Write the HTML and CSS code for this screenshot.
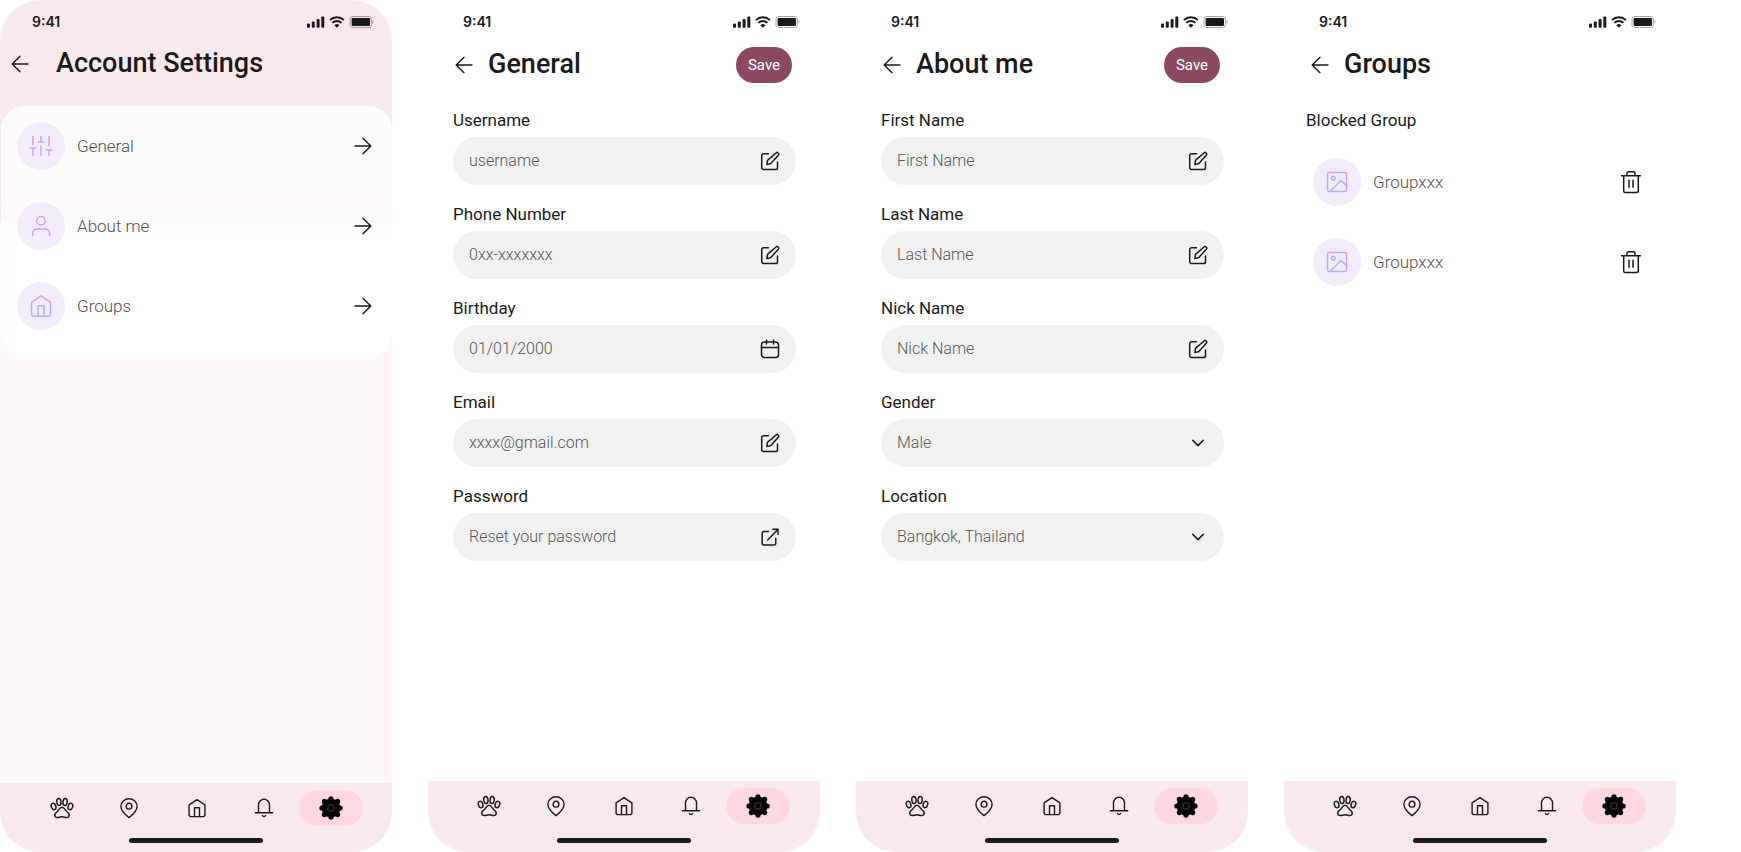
FILE: index.html
```html
<!DOCTYPE html>
<html lang="en">
<head>
<meta charset="utf-8">
<meta name="viewport" content="width=device-width, initial-scale=1">
<title>Account Settings</title>
<link rel="stylesheet" href="styles.css">
</head>
<body>
<svg class="sprite" aria-hidden="true">
  <symbol id="status" viewBox="0 0 67 12">
    <g fill="currentColor">
      <rect x="0" y="7.5" width="3" height="4.2" rx="1"/><rect x="4.8" y="5.4" width="3" height="6.3" rx="1"/><rect x="9.6" y="3" width="3" height="8.7" rx="1"/><rect x="14.3" y="0.4" width="3" height="11.3" rx="1"/>
      <rect x="44.6" y="2" width="18.4" height="8" rx="1.2"/>
      <path d="M27.3 9.3a3.7 3.7 0 0 1 5.2 0l-2.6 2.5z"/>
    </g>
    <g fill="none" stroke="currentColor" stroke-width="1.9"><path d="M22.9 4.1a10.2 10.2 0 0 1 14 0"/><path d="M25.3 6.9a6.7 6.7 0 0 1 9.2 0"/></g>
    <rect x="43" y="0.5" width="21.4" height="11" rx="2.6" fill="none" stroke="currentColor" opacity=".38"/>
    <path d="M65.5 4v4c1.5-.5 1.5-3.500 0-4z" fill="currentColor" opacity=".4"/>
  </symbol>
  <symbol id="back" viewBox="0 0 24 24"><path d="M20 12H4.500M12 4.200L4.200 12l7.800 7.800"/></symbol>
  <symbol id="next" viewBox="0 0 24 24"><path d="M4 12h15.500M12 4.200l7.800 7.800-7.800 7.800"/></symbol>
  <symbol id="edit" viewBox="0 0 24 24"><path d="M10.500 4.800H5.600a1.900 1.900 0 0 0-1.900 1.900v12a1.900 1.900 0 0 0 1.900 1.900h12a1.900 1.900 0 0 0 1.900-1.900v-5.600"/><path d="M18.300 3.700a1 1 0 0 1 1.400 0l.8.8a1 1 0 0 1 0 1.400l-7.700 8.600-3.900 1.100.6-4.200z"/></symbol>
  <symbol id="calendar" viewBox="0 0 24 24"><rect x="3.500" y="5" width="17" height="15.500" rx="3"/><path d="M3.500 10.500h17M8.500 3v4M15.500 3v4"/></symbol>
  <symbol id="external" viewBox="0 0 24 24"><path d="M10.500 6.500H5.900A1.700 1.700 0 0 0 4.200 8.200v10.200a1.700 1.700 0 0 0 1.700 1.700h10.200a1.700 1.700 0 0 0 1.700-1.700v-4.900M9.700 15L20 4.200M14.700 4.200H20v5.300"/></symbol>
  <symbol id="chevron" viewBox="0 0 24 24"><path d="M6.800 9.400l5.200 5.200 5.200-5.200"/></symbol>
  <symbol id="trash" viewBox="0 0 24 24"><path d="M2.500 5.700h19M4.700 5.700v15.200a1.600 1.600 0 0 0 1.600 1.600h11.400a1.600 1.600 0 0 0 1.600-1.600V5.700M8 5.700V3.500a1.700 1.700 0 0 1 1.700-1.700h4.600A1.700 1.700 0 0 1 16 3.500v2.200M10 10.300v7M14 10.300v7"/></symbol>
  <symbol id="sliders" viewBox="0 0 24 24"><path d="M4 2.300v8.200M1 14h6M4 14v7.700M12 2.300V8M9 8h6M12 12v9.700M20 2.300v9.400M17 16h6M20 16v5.700"/></symbol>
  <symbol id="user" viewBox="0 0 24 24"><circle cx="12" cy="6.700" r="4.300"/><path d="M3.700 21.700v-2.400a4.300 4.300 0 0 1 4.300-4.300h8.300a4.300 4.300 0 0 1 4.300 4.300v2.400"/></symbol>
  <symbol id="home" viewBox="0 0 24 24"><path d="M2.500 8.300L12 1.900l9.500 6.400v11.900a2.100 2.100 0 0 1-2.100 2.100H4.600a2.100 2.100 0 0 1-2.100-2.100zM9 22.300V11.700h6v10.600"/></symbol>
  <symbol id="image" viewBox="0 0 24 24"><rect x="2.500" y="2.500" width="19" height="19" rx="1.700"/><circle cx="8.300" cy="8.300" r="1.800"/><path d="M5 21.500l11-11 5.500 5.200"/></symbol>
  <symbol id="pin" viewBox="0 0 24 24"><path d="M20.100 10.200c0 5.200-4.400 8.500-8.100 11.400-3.700-2.900-8.100-6.200-8.100-11.400a8.100 7.500 0 0 1 16.200 0z"/><circle cx="12" cy="10.200" r="2.900"/></symbol>
  <symbol id="bell" viewBox="0 0 24 24"><path d="M3.300 16.700h17.400M6.500 16.700V9a5.500 5.700 0 0 1 11 0v7.700M10.300 19.500c.8 1.300 2.600 1.300 3.400 0"/></symbol>
  <symbol id="paw" viewBox="0 0 24 24"><ellipse cx="3.600" cy="10.500" rx="2.200" ry="3.300" transform="rotate(-18 3.600 10.500)"/><ellipse cx="8.900" cy="6" rx="2.100" ry="3.500" transform="rotate(-6 8.900 6)"/><ellipse cx="15.100" cy="6" rx="2.100" ry="3.500" transform="rotate(6 15.100 6)"/><ellipse cx="20.400" cy="10.500" rx="2.200" ry="3.300" transform="rotate(18 20.400 10.500)"/><path d="M12 11.300c-2.500 0-3.300 3.300-5.200 4.700-1.900 1.300-2.500 3.100-1.600 4.600 1.400 2.100 4.300.2 6.800.2s5.400 1.900 6.800-.2c.9-1.500.3-3.300-1.600-4.600-1.900-1.400-2.700-4.700-5.200-4.700z"/></symbol>
  <symbol id="gear" viewBox="0 0 24 24"><g fill="#050505" stroke="none"><circle cx="12" cy="12" r="9.400"/><circle cx="12" cy="2.900" r="2.600"/><circle cx="12" cy="21.100" r="2.600"/><circle cx="2.900" cy="12" r="2.600"/><circle cx="21.100" cy="12" r="2.600"/><circle cx="5.400" cy="5.400" r="2.600"/><circle cx="18.600" cy="5.400" r="2.600"/><circle cx="5.400" cy="18.600" r="2.600"/><circle cx="18.600" cy="18.600" r="2.600"/></g><circle cx="12" cy="12" r="3.200" stroke="#292929"/></symbol>
</svg>

<main class="board">
  <section class="phone phone-tinted">
    <div class="status status-wide"><span>9:41</span><svg class="status-icons" aria-hidden="true"><use href="#status"/></svg></div>
    <header class="header header-wide">
      <button class="icon-button" aria-label="Back"><svg class="icon thin"><use href="#back"/></svg></button>
      <h1 class="title">Account Settings</h1>
    </header>
    <div class="card">
      <a class="row" href="#general"><span class="avatar"><svg class="icon"><use href="#sliders"/></svg></span><span class="row-text">General</span><svg class="icon"><use href="#next"/></svg></a>
      <a class="row" href="#about"><span class="avatar"><svg class="icon"><use href="#user"/></svg></span><span class="row-text">About me</span><svg class="icon"><use href="#next"/></svg></a>
      <a class="row" href="#groups"><span class="avatar"><svg class="icon"><use href="#home"/></svg></span><span class="row-text">Groups</span><svg class="icon"><use href="#next"/></svg></a>
    </div>
    <footer class="footer footer-low">
      <nav class="nav">
        <a class="tab" href="#pets" aria-label="Pets"><svg class="icon"><use href="#paw"/></svg></a>
        <a class="tab" href="#map" aria-label="Map"><svg class="icon thin"><use href="#pin"/></svg></a>
        <a class="tab" href="#home-page" aria-label="Home"><svg class="icon small"><use href="#home"/></svg></a>
        <a class="tab" href="#alerts" aria-label="Notifications"><svg class="icon thin"><use href="#bell"/></svg></a>
        <a class="tab tab-active" href="#settings" aria-label="Settings"><svg class="icon"><use href="#gear"/></svg></a>
      </nav>
      <div class="home-bar"></div>
    </footer>
  </section>

  <section class="phone" id="general">
    <div class="status"><span>9:41</span><svg class="status-icons" aria-hidden="true"><use href="#status"/></svg></div>
    <header class="header">
      <button class="icon-button" aria-label="Back"><svg class="icon thin"><use href="#back"/></svg></button>
      <h1 class="title">General</h1>
      <button class="save">Save</button>
    </header>
    <form class="form">
      <div class="field"><label for="username">Username</label><div class="box"><input id="username" type="text" placeholder="username"><button type="button" class="icon-button" aria-label="Edit username"><svg class="icon"><use href="#edit"/></svg></button></div></div>
      <div class="field"><label for="phone">Phone Number</label><div class="box"><input id="phone" type="tel" placeholder="0xx-xxxxxxx"><button type="button" class="icon-button" aria-label="Edit phone number"><svg class="icon"><use href="#edit"/></svg></button></div></div>
      <div class="field"><label for="birthday">Birthday</label><div class="box"><input id="birthday" type="text" placeholder="01/01/2000"><button type="button" class="icon-button" aria-label="Choose birthday"><svg class="icon"><use href="#calendar"/></svg></button></div></div>
      <div class="field"><label for="email">Email</label><div class="box"><input id="email" type="email" placeholder="xxxx@gmail.com"><button type="button" class="icon-button" aria-label="Edit email"><svg class="icon"><use href="#edit"/></svg></button></div></div>
      <div class="field"><label for="password">Password</label><div class="box"><input id="password" type="password" placeholder="Reset your password"><button type="button" class="icon-button" aria-label="Reset password"><svg class="icon"><use href="#external"/></svg></button></div></div>
    </form>
    <footer class="footer">
      <nav class="nav">
        <a class="tab" href="#pets" aria-label="Pets"><svg class="icon"><use href="#paw"/></svg></a>
        <a class="tab" href="#map" aria-label="Map"><svg class="icon thin"><use href="#pin"/></svg></a>
        <a class="tab" href="#home-page" aria-label="Home"><svg class="icon small"><use href="#home"/></svg></a>
        <a class="tab" href="#alerts" aria-label="Notifications"><svg class="icon thin"><use href="#bell"/></svg></a>
        <a class="tab tab-active" href="#settings" aria-label="Settings"><svg class="icon"><use href="#gear"/></svg></a>
      </nav>
      <div class="home-bar"></div>
    </footer>
  </section>

  <section class="phone" id="about">
    <div class="status"><span>9:41</span><svg class="status-icons" aria-hidden="true"><use href="#status"/></svg></div>
    <header class="header">
      <button class="icon-button" aria-label="Back"><svg class="icon thin"><use href="#back"/></svg></button>
      <h1 class="title">About me</h1>
      <button class="save">Save</button>
    </header>
    <form class="form">
      <div class="field"><label for="first">First Name</label><div class="box"><input id="first" type="text" placeholder="First Name"><button type="button" class="icon-button" aria-label="Edit first name"><svg class="icon"><use href="#edit"/></svg></button></div></div>
      <div class="field"><label for="last">Last Name</label><div class="box"><input id="last" type="text" placeholder="Last Name"><button type="button" class="icon-button" aria-label="Edit last name"><svg class="icon"><use href="#edit"/></svg></button></div></div>
      <div class="field"><label for="nick">Nick Name</label><div class="box"><input id="nick" type="text" placeholder="Nick Name"><button type="button" class="icon-button" aria-label="Edit nick name"><svg class="icon"><use href="#edit"/></svg></button></div></div>
      <div class="field"><label for="gender">Gender</label><div class="box"><select id="gender"><option>Male</option><option>Female</option></select><svg class="icon"><use href="#chevron"/></svg></div></div>
      <div class="field"><label for="location">Location</label><div class="box"><select id="location"><option>Bangkok, Thailand</option></select><svg class="icon"><use href="#chevron"/></svg></div></div>
    </form>
    <footer class="footer">
      <nav class="nav">
        <a class="tab" href="#pets" aria-label="Pets"><svg class="icon"><use href="#paw"/></svg></a>
        <a class="tab" href="#map" aria-label="Map"><svg class="icon thin"><use href="#pin"/></svg></a>
        <a class="tab" href="#home-page" aria-label="Home"><svg class="icon small"><use href="#home"/></svg></a>
        <a class="tab" href="#alerts" aria-label="Notifications"><svg class="icon thin"><use href="#bell"/></svg></a>
        <a class="tab tab-active" href="#settings" aria-label="Settings"><svg class="icon"><use href="#gear"/></svg></a>
      </nav>
      <div class="home-bar"></div>
    </footer>
  </section>

  <section class="phone" id="groups">
    <div class="status"><span>9:41</span><svg class="status-icons" aria-hidden="true"><use href="#status"/></svg></div>
    <header class="header">
      <button class="icon-button" aria-label="Back"><svg class="icon thin"><use href="#back"/></svg></button>
      <h1 class="title">Groups</h1>
    </header>
    <div class="blocked">
      <h2 class="subtitle">Blocked Group</h2>
      <div class="row"><span class="avatar"><svg class="icon"><use href="#image"/></svg></span><span class="row-text">Groupxxx</span><button class="icon-button" aria-label="Remove group"><svg class="icon"><use href="#trash"/></svg></button></div>
      <div class="row"><span class="avatar"><svg class="icon"><use href="#image"/></svg></span><span class="row-text">Groupxxx</span><button class="icon-button" aria-label="Remove group"><svg class="icon"><use href="#trash"/></svg></button></div>
    </div>
    <footer class="footer">
      <nav class="nav">
        <a class="tab" href="#pets" aria-label="Pets"><svg class="icon"><use href="#paw"/></svg></a>
        <a class="tab" href="#map" aria-label="Map"><svg class="icon thin"><use href="#pin"/></svg></a>
        <a class="tab" href="#home-page" aria-label="Home"><svg class="icon small"><use href="#home"/></svg></a>
        <a class="tab" href="#alerts" aria-label="Notifications"><svg class="icon thin"><use href="#bell"/></svg></a>
        <a class="tab tab-active" href="#settings" aria-label="Settings"><svg class="icon"><use href="#gear"/></svg></a>
      </nav>
      <div class="home-bar"></div>
    </footer>
  </section>
</main>
</body>
</html>
```
FILE: styles.css
```css
* { box-sizing: border-box; }

body {
  margin: 0;
  background: #fff;
  color: #1a1a1a;
  font-family: Roboto, "Noto Sans", sans-serif;
  font-size: 17px;
  line-height: 26px;
}

button, input, select { font: inherit; color: inherit; }
a { color: inherit; text-decoration: none; }
.sprite { display: none; }

.board {
  display: grid;
  grid-template-columns: repeat(4, minmax(0, 1fr));
  gap: 36px;
  min-height: 100vh;
  padding-right: 65px;
}

.phone {
  display: flex;
  flex-direction: column;
  border-radius: 40px;
  overflow: hidden;
  background: #fff;
}
.phone-tinted { background: linear-gradient(#fae9ec 222px, #fff8f8 222px); }

.status {
  display: flex;
  justify-content: space-between;
  align-items: center;
  height: 44px;
  padding: 0 20px 0 35px;
  font-family: Inter, "Liberation Sans", sans-serif;
  font-size: 14px;
  font-weight: 600;
}
.status-wide { padding: 0 18px 0 32px; }
.status-icons { width: 67px; height: 12px; }

.header {
  display: flex;
  align-items: center;
  gap: 12px;
  height: 42px;
  padding: 0 28px 0 24px;
}
.header-wide { gap: 24px; padding-left: 8px; height: 40px; }
.title {
  flex: 1;
  margin: 0;
  padding-bottom: 2px;
  font-size: 27px;
  font-weight: 500;
  line-height: 36px;
}
.save {
  width: 56px;
  height: 36px;
  border: 0;
  border-radius: 18px;
  padding: 0;
  background: #8a4a62;
  color: #fff;
  font-size: 15px;
}

.icon {
  display: block;
  flex: none;
  width: 24px;
  height: 24px;
  fill: none;
  stroke: currentColor;
  stroke-width: 1.5;
  stroke-linecap: round;
  stroke-linejoin: round;
}
.thin { stroke-width: 1.4; }
.small { width: 20px; height: 20px; stroke-width: 1.7; }
.icon-button { border: 0; padding: 0; background: none; cursor: pointer; }

.card {
  display: flex;
  flex-direction: column;
  gap: 32px;
  margin: 22px 0 0 1px;
  padding: 16px 17px 27px 16px;
  border-radius: 24px;
  background: linear-gradient(#fefcfa 90px, #fdfafc 112px, #fff 132px);
}
.row {
  display: flex;
  align-items: center;
  gap: 12px;
}
.row-text { flex: 1; color: #505050; font-weight: 300; }
.avatar {
  display: grid;
  place-items: center;
  width: 48px;
  height: 48px;
  border-radius: 50%;
  background: #f3ebf9;
  color: #b3b1f3;
}

.form {
  display: flex;
  flex-direction: column;
  gap: 16px;
  padding: 21px 24px 0 25px;
}
.field { display: flex; flex-direction: column; gap: 4px; }
.box {
  display: flex;
  align-items: center;
  height: 48px;
  padding: 0 14px 0 16px;
  border-radius: 24px;
  background: #f1f1f1;
}
.box input, .box select {
  flex: 1;
  min-width: 0;
  border: 0;
  padding: 0;
  background: none;
  color: #555;
  font-size: 16px;
  font-weight: 300;
  appearance: none;
  outline: none;
}
.box input::placeholder { color: #555; opacity: 1; }

.blocked {
  display: flex;
  flex-direction: column;
  gap: 32px;
  padding: 21px 33px 0 29px;
}
.subtitle {
  margin: 0 0 -7px -7px;
  font-size: 17px;
  font-weight: 400;
  line-height: 26px;
}

.footer {
  margin-top: auto;
  padding: 7px 0 9px;
  background: #fae9ec;
}
.nav {
  display: flex;
  justify-content: space-between;
  padding: 0 30px 0 29px;
}
.footer-low .nav { padding: 0 29px 0 30px; }
.tab {
  display: grid;
  place-items: center;
  width: 64px;
  height: 36px;
  border-radius: 18px;
}
.tab-active { background: #ffd7e1; }
.home-bar {
  width: 134px;
  height: 5px;
  margin: 14px auto 0;
  border-radius: 3px;
  background: #1c1c1c;
}
.footer-low .home-bar { margin-top: 12px; }
```
